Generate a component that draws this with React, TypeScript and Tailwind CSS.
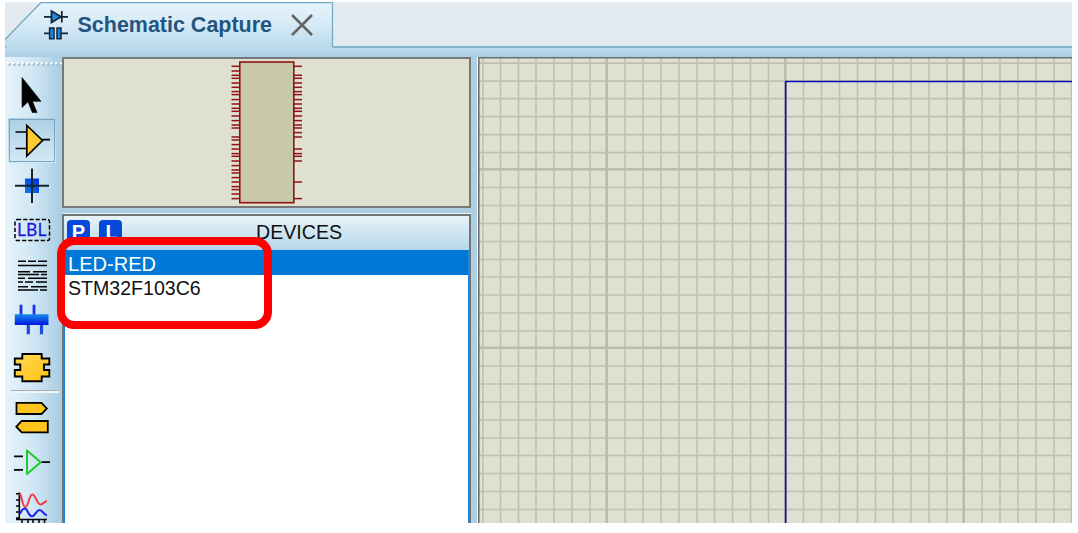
import React from "react";

const leftPins = [66, 70.7, 75, 78, 82.7, 87, 91.3, 94.3, 99.3, 103.7, 108, 111, 115.7, 120.3, 124.7, 127.7, 136.7, 139.7, 144.3, 148.7, 153.3, 156, 160.7, 165.3, 169.7, 172.7, 177.3, 181.7, 186.3, 189.3, 193.7, 198.3];
const rightPins = [66, 75, 78, 82.7, 87, 91.3, 94.3, 99.3, 103.7, 108, 111, 115.7, 120.3, 124.7, 127.7, 132.3, 136.7, 148.7, 153.3, 156, 160.7, 181.7, 198.3];

const minor = [17.5, 35.5, 53.5, 71.5, 89.5, 107, 125, 143, 161];
const majorX = [428.2, 606.7, 785.2, 963.7];
const majorY = [-9.2, 169.2, 347.7];
const columns = majorX.flatMap((m) => minor.map((d) => m + d + 0.8)).filter((x) => x > 484 && x < 1072);
const rows = majorY.flatMap((m) => minor.map((d) => m + d + 0.8)).filter((y) => y > 58 && y < 523);

function Tool({ y, h, active, children }: { y: number; h: number; active?: boolean; children: React.ReactNode }) {
  return (
    <div className={active ? "w-12 bg-linear-to-b from-[#add0e4] to-[#d3e9f5] outline-[1.5px] -outline-offset-2 outline-[#76a6c4]" : "w-12"}>
      <svg className="block" width={48} height={h} viewBox={`8 ${y} 48 ${h}`} fill="none" stroke="#000" strokeWidth="1.7">
        {children}
      </svg>
    </div>
  );
}

function Toolbar() {
  return (
    <div className="flex w-[57px] shrink-0 flex-col bg-linear-to-r from-[#e5f3fb] via-[#d0e7f4] to-[#a8cde3] pl-[3px]">
      <svg className="-ml-[3px] block" width={57} height={16} viewBox="5 57 57 16">
        <path d="M8.5 64.5H62" stroke="#a5b5bf" strokeWidth="2.3" strokeDasharray="2.2 2.6" />
        <path d="M7.2 63.2H62" stroke="#fff" strokeWidth="2" strokeDasharray="2 2.8" />
      </svg>
      <Tool y={73} h={45}>
        <path d="M22 77.5V107.5L28 101.8L32.3 112.5H37L32.5 101.3H41Z" fill="#000" strokeWidth=".6" />
      </Tool>
      <Tool y={118} h={45} active>
        <path d="M15.5 132H26M15.5 148.5H26M42 139.7H50" />
        <path d="M26.8 125.5V156L42.5 140.5Z" fill="#ffcb32" />
      </Tool>
      <Tool y={163} h={45}>
        <defs>
          <linearGradient id="node" x1="1" x2="0" y1="0" y2="1">
            <stop stopColor="#0030e8" /><stop offset="1" stopColor="#087fe8" />
          </linearGradient>
        </defs>
        <path d="M25 178.5H39V193H25Z" fill="url(#node)" stroke="none" />
        <path d="M32 168.5V203M15 185.8H49" stroke="#16232e" strokeWidth="2" />
      </Tool>
      <Tool y={208} h={44}>
        <rect x="15" y="219.5" width="34.5" height="21" rx="2" strokeDasharray="4.2 2" strokeWidth="1.5" />
        <text x="17" y="236.4" textLength="29.5" lengthAdjust="spacingAndGlyphs" fill="#1919e6" stroke="#1919e6" strokeWidth=".3" className="font-['Noto_Sans',sans-serif] text-[17.5px]">LBL</text>
      </Tool>
      <Tool y={252} h={45}>
        <path d="M18 261.3H26M28 261.3H36M38 261.3H47M18 265.5H47M18 271.7H30M33 271.7H47M18 274.5H39M41 274.5H47M18 278.3H25M28 278.3H47M18 282H23M25 282H33M36 282H47M18 286.7H28M31 286.7H47M18 290H38M40 290H47" strokeWidth="1.5" />
      </Tool>
      <Tool y={297} h={47}>
        <defs>
          <linearGradient id="bus" x2="0" y2="1">
            <stop stopColor="#168bed" /><stop offset="1" stopColor="#0016df" />
          </linearGradient>
        </defs>
        <path d="M21 304.8V315M34 304.8V315" stroke="#1a30ea" strokeWidth="2.8" />
        <path d="M28.3 324V334.3M41.5 324V334.3" stroke="#1c4bdc" strokeWidth="3.2" />
        <path d="M14.8 314.3H48.5V325H14.8Z" fill="url(#bus)" stroke="none" />
      </Tool>
      <Tool y={344} h={45}>
        <defs>
          <linearGradient id="chip" x2="1" y2="1">
            <stop stopColor="#ffda55" /><stop offset="1" stopColor="#ffc012" />
          </linearGradient>
        </defs>
        <path d="M22.3 354H41.7V358.5H49.3V364.5H44V370H49.3V376.5H41.7V381.3H22.3V376.5H14.8V370H20.3V364.5H14.8V358.5H22.3Z" fill="url(#chip)" strokeWidth="1.9" />
      </Tool>
      <div className="ml-[3px] h-1 w-12 pt-px">
        <div className="h-[3px] border-t border-b-2 border-t-[#a9aaac] border-b-[#f0f8fc]" />
      </div>
      <Tool y={393} h={47}>
        <path d="M16.5 402.8H41.5L46.8 408.4L41.5 414H16.5Z" fill="#ffc51c" strokeWidth="1.8" />
        <path d="M47.8 421H21.7L16.3 426.7L21.7 432.3H47.8Z" fill="#ffc51c" strokeWidth="1.8" />
      </Tool>
      <Tool y={440} h={45}>
        <path d="M14 456.3H23M14 469.8H23M41.5 462.2H50" />
        <path d="M27 450.5V474L40.7 462.2Z" stroke="#1fc92c" strokeWidth="2" strokeLinejoin="round" />
      </Tool>
      <Tool y={485} h={38}>
        <path d="M19.3 492.5V520M16 493.8H19M16 500H19M16 506H19M16 512H19M16 518H19M16 519.5H47M22 519V523M28 519V523M33 519V523M39 519V523M44.5 519V523" strokeWidth="1.5" />
        <path d="M20 493.5C22.5 499 22.5 507 25.5 507S29 494.5 32.3 494.5S37 504.5 40.5 504.5C43.5 504.5 44 501.5 47 501" stroke="#f43b43" strokeWidth="2" />
        <path d="M20 514C21.5 510 23 508.5 24.8 508.5C28 508.5 28 516.3 31.7 516.3S36 510 39.5 510C43 510 43 515 47 515.3" stroke="#2020f4" strokeWidth="2.1" />
      </Tool>
    </div>
  );
}

function TabStrip() {
  return (
    <div className="flex h-[46px] shrink-0 bg-[#e3eaf0]">
      <div className="relative h-[46px] w-[329px]">
        <svg className="absolute inset-0" width={329} height={46} viewBox="5 2 329 46">
          <defs>
            <linearGradient id="tab" x2="0" y2="1">
              <stop stopColor="#e6f4fb" /><stop offset=".5" stopColor="#d5eaf6" /><stop offset="1" stopColor="#b9daec" />
            </linearGradient>
          </defs>
          <path d="M5 39.5L41 2.5H332.5V48H5Z" fill="url(#tab)" />
          <path d="M5 39.5L41 2.5H332.5V46.8H334M5 46.8H6.5" fill="none" stroke="#76a9c5" strokeWidth="1.3" />
        </svg>
        <div className="relative flex h-full items-center pb-px pl-[38px]">
          <svg width={26} height={36} viewBox="43 6 26 36" fill="none" stroke="#142536" strokeWidth="1.8">
            <path d="M44 15.8H68M61.8 10V21.5" />
            <path d="M51.5 10V21.5L61 15.8Z" fill="#1991ec" />
            <path d="M44 32.3H49M61 32.3H68" />
            <path d="M49.6 27H54V37.7H49.6ZM57 27H61V37.7H57Z" fill="#1688e8" strokeWidth="1.5" />
          </svg>
          <svg className="ml-[5px]" width={204} height={38} viewBox="74 5 204 38">
            <text x="77.5" y="31.3" textLength="194.5" lengthAdjust="spacingAndGlyphs" fill="#245580" className="font-['Liberation_Sans',sans-serif] text-[22px] font-bold">Schematic Capture</text>
          </svg>
          <svg className="ml-[12px]" width={24} height={24} viewBox="290 13 24 24">
            <path d="M292 15L312 35M312 15L292 35" stroke="#646464" strokeWidth="2.5" />
          </svg>
        </div>
      </div>
      <div className="h-full flex-1 border-b-[2px] border-[#82b4ce]" />
    </div>
  );
}

function Preview() {
  return (
    <div className="h-[151px] overflow-hidden border-2 border-[#77787a] bg-[#e0e0d1]">
      <svg className="block" width={405} height={147} viewBox="64 59 405 147" fill="none" stroke="#931116">
        <g strokeWidth="1.5">
          {leftPins.map((y) => <path key={y} d={`M231.5 ${y + 0.3}H240`} />)}
          {rightPins.map((y) => <path key={y} d={`M294 ${y + 0.3}H302`} />)}
        </g>
        <rect x="239.8" y="62" width="54" height="140.7" fill="#c8c8aa" strokeWidth="1.6" />
      </svg>
    </div>
  );
}

function Devices() {
  return (
    <div className="flex min-h-0 flex-1 flex-col border-x-2 border-t-2 border-[#6d7578] bg-white font-['Liberation_Sans',sans-serif] text-[21px] leading-6 text-[#101010]">
      <div className="flex h-[34px] shrink-0 items-start gap-[9px] bg-linear-to-b from-[#e6f4fa] to-[#b5d7e9] pt-1 pl-[3px]">
        <span className="h-[23px] w-[23px] rounded-[4px] bg-[#0648d8] text-center text-[20px] leading-[24px] font-bold text-white">P</span>
        <span className="h-[23px] w-[23px] rounded-[4px] bg-[#0648d8] pl-[2px] text-center text-[20px] leading-[24px] font-bold text-white">L</span>
        <span className="ml-[125px] w-[100px] origin-left scale-x-[.935]">DEVICES</span>
      </div>
      <div className="flex-1 border-x border-[#1683d8]">
        <div className="h-[25px] bg-[#0078d7] pl-[3px] text-white"><span className="inline-block origin-left scale-x-[.955] pt-[2px]">LED-RED</span></div>
        <div className="h-[25px] pl-[3px]"><span className="inline-block origin-left scale-x-[.932] pt-px">STM32F103C6</span></div>
      </div>
    </div>
  );
}

function Sheet() {
  return (
    <div className="w-[594px] shrink-0 overflow-hidden">
      <svg className="block" width={594} height={466} viewBox="478 57 594 466">
        <path d="M478 57H1072V523H478Z" fill="#e0e0d1" />
        <g fill="none" stroke="#c0c0b0" strokeWidth="1.6">
          {columns.map((x) => <path key={x} d={`M${x} 58V523`} />)}
          {rows.map((y) => <path key={y} d={`M478 ${y}H1072`} />)}
          <path d="M482.8 58V523" />
        </g>
        <path d="M606.7 58V523M785.2 58V523M963.7 58V523M478 169.2H1072M478 347.7H1072" stroke="#bbbba9" strokeWidth="2.6" />
        <path d="M1072 81.5H785.7V523" fill="none" stroke="#0909b8" strokeWidth="1.6" />
        <path d="M478.8 523V57.8H1072" fill="none" stroke="#6d7073" strokeWidth="1.6" />
      </svg>
    </div>
  );
}

export default function App() {
  return (
    <div className="h-[533px] w-[1078px] overflow-hidden bg-white pt-[2px] pl-[5px]">
      <div className="relative flex h-[521px] w-[1067px] flex-col overflow-hidden bg-[#b2d4e6]">
        <TabStrip />
        <div className="h-[9px] shrink-0 bg-linear-to-b from-[#bcdced] to-[#aacfe4]" />
        <div className="flex min-h-0 flex-1">
          <Toolbar />
          <div className="flex w-[409px] shrink-0 flex-col">
            <Preview />
            <div className="h-[6px] shrink-0 border-b border-[#e7f1f6] bg-[#abcde0]" />
            <Devices />
          </div>
          <div className="w-[7px] shrink-0 border-r border-white bg-[#afd0e2]" />
          <Sheet />
        </div>
        <div className="absolute top-[235px] left-[52px] h-[92px] w-[215px] rounded-[17px] border-8 border-[#ff0000]" />
      </div>
    </div>
  );
}
